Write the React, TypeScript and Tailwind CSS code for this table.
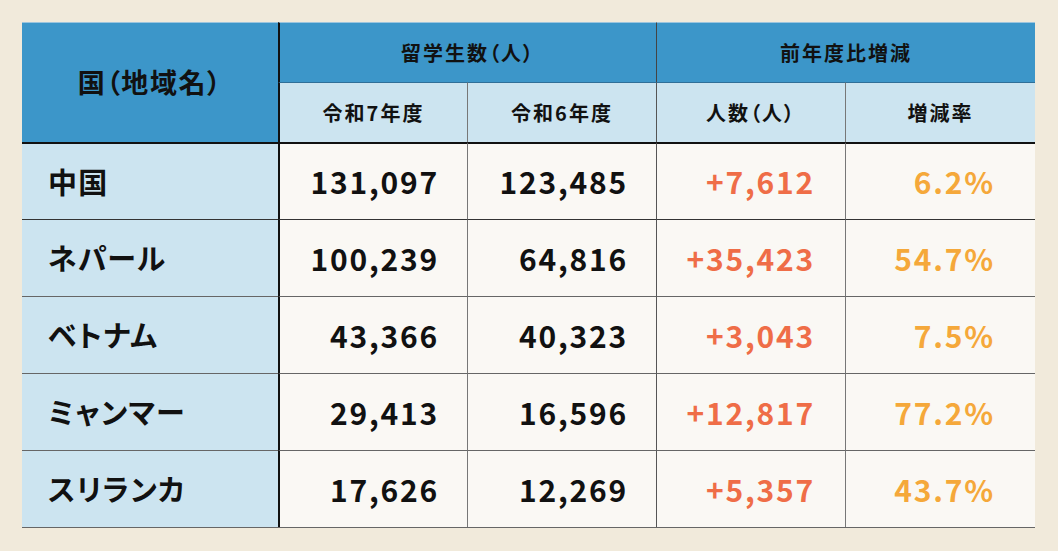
import React from 'react';

interface Row {
    country: string;
    r7: string;
    r6: string;
    diff: string;
    rate: string;
}

const rows: Row[] = [
    { country: '中国', r7: '131,097', r6: '123,485', diff: '+7,612', rate: '6.2%' },
    { country: 'ネパール', r7: '100,239', r6: '64,816', diff: '+35,423', rate: '54.7%' },
    { country: 'ベトナム', r7: '43,366', r6: '40,323', diff: '+3,043', rate: '7.5%' },
    { country: 'ミャンマー', r7: '29,413', r6: '16,596', diff: '+12,817', rate: '77.2%' },
    { country: 'スリランカ', r7: '17,626', r6: '12,269', diff: '+5,357', rate: '43.7%' },
];

const App = () => {
    return (
        <div className="w-[1058px] h-[551px] bg-[#f1eadb] p-[22px] text-[#111] font-['Noto_Sans_CJK_JP','Noto_Sans',sans-serif] [font-feature-settings:'palt']">
            <div className="grid grid-cols-[256px_189px_189px_189px_190px] grid-rows-[60px_60px_77px_77px_77px_77px_77px] w-[1013px] font-bold border-b border-[#666]">
                {/* Header */}
                <div className="row-span-2 bg-[#3c96c9] border-t border-[#9cc5de] flex items-center justify-center text-[27px] tracking-[0.06em]">
                    国（地域名）
                </div>
                <div className="col-span-2 bg-[#3c96c9] border-t border-[#9cc5de] border-l-2 border-l-[#111] flex items-center justify-center text-[20px] tracking-[0.1em]">
                    留学生数（人）
                </div>
                <div className="col-span-2 bg-[#3c96c9] border-t border-[#9cc5de] border-l border-l-[#444] flex items-center justify-center text-[20px] tracking-[0.1em]">
                    前年度比増減
                </div>
                <div className="bg-[#cce4f0] border-t border-[#2f6f98] border-l-2 border-l-[#111] flex items-center justify-center text-[20px] tracking-[0.1em]">
                    令和7年度
                </div>
                <div className="bg-[#cce4f0] border-t border-[#2f6f98] border-l border-l-[#777] flex items-center justify-center text-[20px] tracking-[0.1em]">
                    令和6年度
                </div>
                <div className="bg-[#cce4f0] border-t border-[#2f6f98] border-l border-l-[#555] flex items-center justify-center text-[20px] tracking-[0.1em]">
                    人数（人）
                </div>
                <div className="bg-[#cce4f0] border-t border-[#2f6f98] border-l border-l-[#777] flex items-center justify-center text-[20px] tracking-[0.1em]">
                    増減率
                </div>

                {/* Body */}
                {rows.map((row, i) => {
                    const top = i === 0 ? 'border-t-2 border-t-[#111]' : i === 1 ? 'border-t border-t-[#333]' : 'border-t border-t-[#666]';
                    return (
                        <React.Fragment key={row.country}>
                            <div className={`bg-[#cce4f0] ${top} flex items-center pl-[26px] text-[29px] tracking-[0.04em]`}>
                                {row.country}
                            </div>
                            <div className={`bg-[#faf8f4] ${top} border-l-2 border-l-[#111] flex items-center justify-end pr-[28px] text-[30px] tracking-[0.06em]`}>
                                {row.r7}
                            </div>
                            <div className={`bg-[#faf8f4] ${top} border-l border-l-[#777] flex items-center justify-end pr-[28px] text-[30px] tracking-[0.06em]`}>
                                {row.r6}
                            </div>
                            <div className={`bg-[#faf8f4] ${top} border-l border-l-[#555] flex items-center justify-end pr-[30px] text-[30px] tracking-[0.06em] text-[#ef6d47]`}>
                                {row.diff}
                            </div>
                            <div className={`bg-[#faf8f4] ${top} border-l border-l-[#777] flex items-center justify-end pr-[40px] text-[30px] tracking-[0.06em] text-[#f5a83a]`}>
                                {row.rate}
                            </div>
                        </React.Fragment>
                    );
                })}
            </div>
        </div>
    );
};

export default App;
